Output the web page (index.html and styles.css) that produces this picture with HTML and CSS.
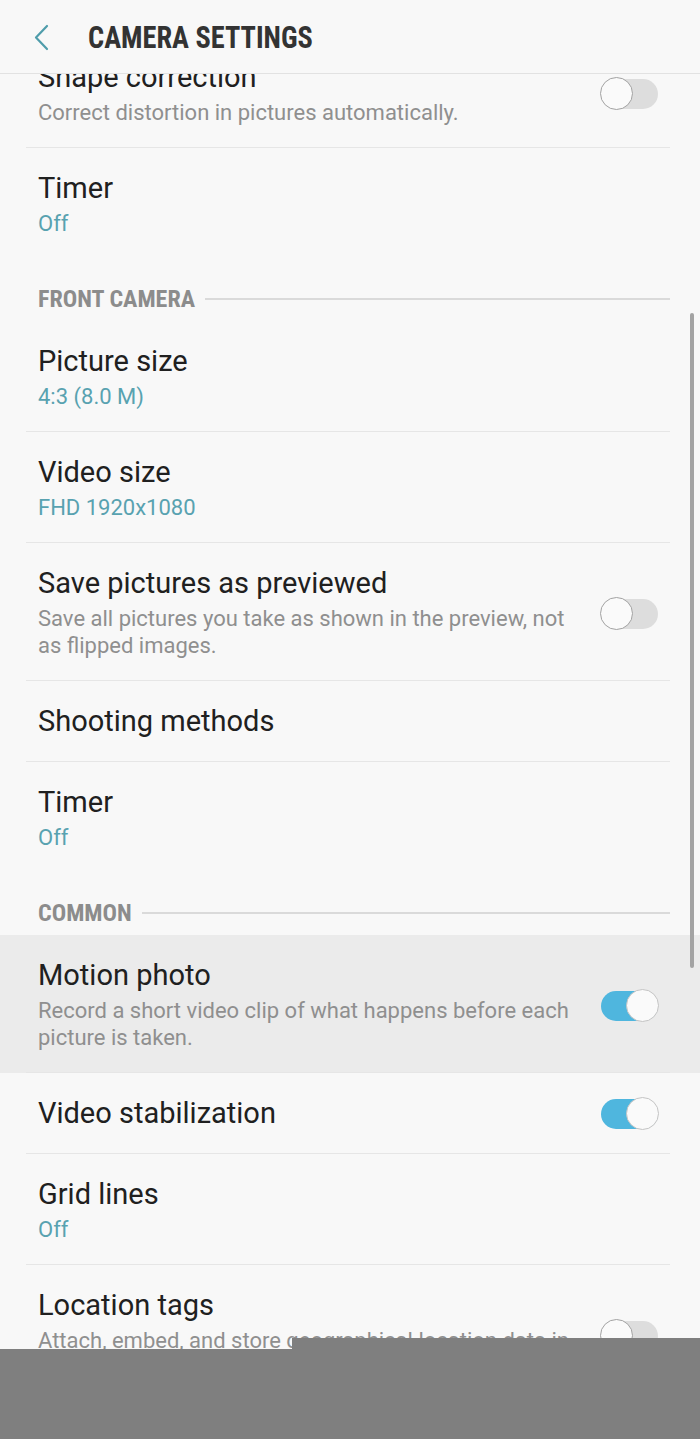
FILE: index.html
```html
<!DOCTYPE html>
<html>
<head>
    <title>Camera settings</title>
    <link rel="stylesheet" href="styles.css">
</head>
<body>

<header class="appbar">
    <svg class="back" width="18" height="28" viewBox="0 0 18 28">
        <polyline points="14,2 3,13.5 14,25" fill="none" stroke="#4f9dab" stroke-width="2.2" stroke-linecap="round" stroke-linejoin="round"/>
    </svg>
    <h1>CAMERA SETTINGS</h1>
</header>

<main class="list">
    <div class="row">
        <div class="item">
            <div class="text">
                <div class="title">Shape correction</div>
                <div class="summary">Correct distortion in pictures automatically.</div>
            </div>
            <span class="switch"></span>
        </div>
    </div>
    <div class="row">
        <div class="item last">
            <div class="text">
                <div class="title">Timer</div>
                <div class="value">Off</div>
            </div>
        </div>
    </div>

    <div class="section"><span>FRONT CAMERA</span></div>

    <div class="row">
        <div class="item">
            <div class="text">
                <div class="title">Picture size</div>
                <div class="value">4:3 (8.0 M)</div>
            </div>
        </div>
    </div>
    <div class="row">
        <div class="item">
            <div class="text">
                <div class="title">Video size</div>
                <div class="value">FHD 1920x1080</div>
            </div>
        </div>
    </div>
    <div class="row">
        <div class="item">
            <div class="text">
                <div class="title">Save pictures as previewed</div>
                <div class="summary">Save all pictures you take as shown in the preview, not as flipped images.</div>
            </div>
            <span class="switch"></span>
        </div>
    </div>
    <div class="row">
        <div class="item single">
            <div class="text">
                <div class="title">Shooting methods</div>
            </div>
        </div>
    </div>
    <div class="row">
        <div class="item last">
            <div class="text">
                <div class="title">Timer</div>
                <div class="value">Off</div>
            </div>
        </div>
    </div>

    <div class="section"><span>COMMON</span></div>

    <div class="row pressed">
        <div class="item">
            <div class="text">
                <div class="title">Motion photo</div>
                <div class="summary">Record a short video clip of what happens before each picture is taken.</div>
            </div>
            <span class="switch on"></span>
        </div>
    </div>
    <div class="row">
        <div class="item single">
            <div class="text">
                <div class="title">Video stabilization</div>
            </div>
            <span class="switch on"></span>
        </div>
    </div>
    <div class="row">
        <div class="item">
            <div class="text">
                <div class="title">Grid lines</div>
                <div class="value">Off</div>
            </div>
        </div>
    </div>
    <div class="row">
        <div class="item">
            <div class="text">
                <div class="title">Location tags</div>
                <div class="summary">Attach, embed, and store geographical location data in pictures and videos.</div>
            </div>
            <span class="switch"></span>
        </div>
    </div>
</main>

<div class="scrollbar"></div>
<div class="cover"></div>

</body>
</html>
```

FILE: styles.css
```css
body {
    margin: 0;
    height: 1439px;
    overflow: hidden;
    position: relative;
    background: #f8f8f8;
    font-family: Roboto, "Noto Sans", sans-serif;
    color: #202020;
}

.appbar {
    position: fixed;
    top: 0;
    left: 0;
    right: 0;
    height: 73px;
    z-index: 2;
    display: flex;
    align-items: center;
    padding-left: 33px;
    background: #f8f8f8;
    border-bottom: 1px solid #e2e2e2;
}

.appbar .back {
    display: block;
    margin-top: 2px;
}

.appbar h1 {
    margin: 0 0 0 37px;
    font-family: "Roboto Condensed", "Liberation Sans Narrow", "DejaVu Sans Condensed", sans-serif;
    font-weight: bold;
    font-size: 32px;
    line-height: 36px;
    color: #333;
    transform: scaleX(0.885);
    transform-origin: left center;
    white-space: nowrap;
}

.list {
    padding-top: 37px;
}

.row {
    padding: 0 30px 0 26px;
}

.row.pressed {
    background: #ebebeb;
}

.item {
    display: flex;
    align-items: center;
    padding: 25px 12px 21px;
    border-bottom: 1px solid #e6e6e6;
}

.item.single {
    padding-bottom: 24px;
}

.item.last {
    padding-bottom: 22px;
    border-bottom: none;
}

.text {
    flex: 1;
    min-width: 0;
}

.title {
    font-size: 29px;
    line-height: 31px;
}

.summary, .value {
    margin-top: 6px;
    font-size: 22px;
    line-height: 27px;
    color: #8f8f8f;
}

.value {
    color: #58a2b0;
}

/* category header with trailing rule */
.section {
    display: flex;
    align-items: center;
    padding: 28px 30px 10px 38px;
}

.section span {
    font-family: "Roboto Condensed", "Liberation Sans Narrow", "DejaVu Sans Condensed", sans-serif;
    font-weight: bold;
    font-size: 24px;
    line-height: 24px;
    color: #8c8c8c;
}

.section::after {
    content: "";
    flex: 1;
    height: 2px;
    margin-left: 10px;
    background: #dadada;
}

/* toggle switch */
.switch {
    position: relative;
    flex: none;
    width: 57px;
    height: 30px;
    margin-left: 22px;
    border-radius: 15px;
    background: #dddddd;
}

.switch::after {
    content: "";
    position: absolute;
    top: -2px;
    left: -1px;
    width: 31px;
    height: 31px;
    border-radius: 50%;
    border: 1.5px solid #a2a2a2;
    background: #fafafa;
}

.switch.on {
    background: #4fb6de;
}

.switch.on::after {
    left: auto;
    right: -1px;
    border-color: #c4c4c4;
}

.scrollbar {
    position: absolute;
    left: 690px;
    top: 313px;
    width: 4px;
    height: 655px;
    border-radius: 2px;
    background: #a3a3a3;
}

/* blanked strip at the bottom of the capture */
.cover {
    position: absolute;
    left: 0;
    right: 0;
    top: 1349px;
    bottom: 0;
    background: #7f7f7f;
}

.cover::before {
    content: "";
    position: absolute;
    left: 292px;
    right: 0;
    top: -11px;
    height: 11px;
    background: #7f7f7f;
}
```
